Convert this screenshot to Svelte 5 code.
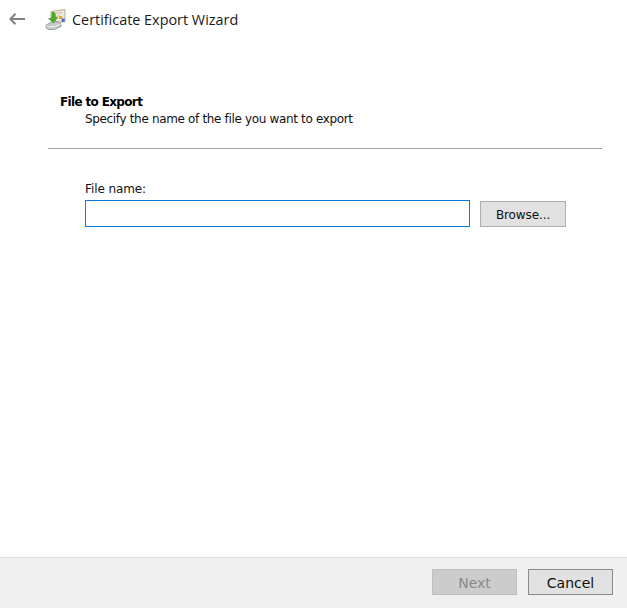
<script lang="ts">
  let fileName = "";
</script>

<div class="wizard">
  <header class="titlebar">
    <svg class="back" width="16" height="12" viewBox="0 0 16 12" aria-hidden="true">
      <path d="M6.5 .8 1.3 6l5.2 5.2M1.3 6H16" fill="none" stroke="#808080" stroke-width="2" />
    </svg>
    <svg class="cert" width="21" height="21" viewBox="0 0 21 21" aria-hidden="true">
      <path d="M6 2.5 20 .5v12l-7 1L6 9Z" fill="#f1e9d6" stroke="#b3ab97" />
      <path d="M9 4.5 17 3.5M12 7l3-.4" stroke="#cbbfa3" stroke-width="1" />
      <rect x="14" y="7" width="3.2" height="3" fill="#e8a02e" />
      <rect x="16.6" y="9.6" width="3" height="3.2" fill="#3b70c6" />
      <path d="M1 16 7 12.8h6.5L16 15v2.4L9.5 20.5H3L1 18.6Z" fill="#c6cac8" stroke="#7c8381" stroke-width=".7" />
      <path d="M1.2 16 3.2 17.6h6.4L15.8 15" fill="none" stroke="#f4f5f5" stroke-width=".9" />
      <path d="M7 3.6C9.5 2.8 10.6 4 10.4 8.6L12.8 8 8.4 14 3.6 9.6 6.6 9.2C6.9 7 7.1 5.4 7 3.6Z" fill="#4cab2c" stroke="#2f8a1c" stroke-width=".5" />
    </svg>
    <h1>Certificate Export Wizard</h1>
  </header>

  <main class="content">
    <section class="intro">
      <h2>File to Export</h2>
      <p>Specify the name of the file you want to export</p>
    </section>
    <hr />
    <div class="field">
      <label for="file-name">File name:</label>
      <div class="row">
        <input id="file-name" type="text" bind:value={fileName} />
        <button class="btn browse" type="button">Browse...</button>
      </div>
    </div>
  </main>

  <footer class="actions">
    <button class="btn next" type="button" disabled>Next</button>
    <button class="btn cancel" type="button">Cancel</button>
  </footer>
</div>

<style>
  :global(body) {
    background: #fff;
  }
  .wizard {
    display: flex;
    flex-direction: column;
    height: 608px;
    font-family: "DejaVu Sans", sans-serif;
    font-size: 12px;
    color: #111;
  }
  .titlebar {
    display: flex;
    align-items: center;
    height: 38px;
    padding-left: 9px;
    flex: none;
  }
  .cert {
    margin-left: 20px;
  }
  h1 {
    margin: 0 0 0 6px;
    font-family: "Open Sans", sans-serif;
    font-size: 14.4px;
    font-weight: 400;
    color: #1a1a1a;
  }
  .content {
    flex: 1;
    padding: 56px 25px 0 48px;
  }
  .intro {
    padding-left: 12px;
  }
  h2 {
    margin: 0;
    font-family: "DejaVu Sans", sans-serif;
    font-size: 12px;
    line-height: 16px;
    font-weight: 700;
    letter-spacing: -0.65px;
    color: #000;
  }
  p {
    margin: 1px 0 0 25px;
    line-height: 16px;
    letter-spacing: -0.34px;
  }
  hr {
    margin: 21px 0 0;
    border: 0;
    border-top: 1px solid #a0a0a0;
  }
  .field {
    margin: 32px 0 0 37px;
  }
  label {
    display: block;
    line-height: 16px;
    margin-bottom: 3px;
    letter-spacing: -0.1px;
  }
  .row {
    display: flex;
    align-items: center;
    gap: 10px;
  }
  input {
    box-sizing: border-box;
    width: 385px;
    height: 27px;
    border: 1px solid #0a78d4;
    outline: 0;
    padding: 0 4px;
    background: #fff;
  }
  .btn {
    box-sizing: border-box;
    height: 26px;
    width: 86px;
    padding: 1px 0 0;
    border: 1px solid #adadad;
    background: #e1e1e1;
    font-family: "DejaVu Sans", sans-serif;
    font-size: 12px;
    color: #111;
  }
  .browse {
    padding-top: 2px;
    letter-spacing: -0.1px;
  }
  .actions {
    flex: none;
    display: flex;
    justify-content: flex-end;
    gap: 11px;
    box-sizing: border-box;
    height: 51px;
    padding: 11px 14px 0 0;
    background: #f0f0f0;
    border-top: 1px solid #dfdfdf;
  }
  .next {
    width: 85px;
    background: #cccccc;
    border-color: #bfbfbf;
    color: #8a8a8a;
    font-size: 14px;
  }
  .cancel {
    width: 85px;
    border-color: #8a8a8a;
    font-size: 14px;
  }
</style>
